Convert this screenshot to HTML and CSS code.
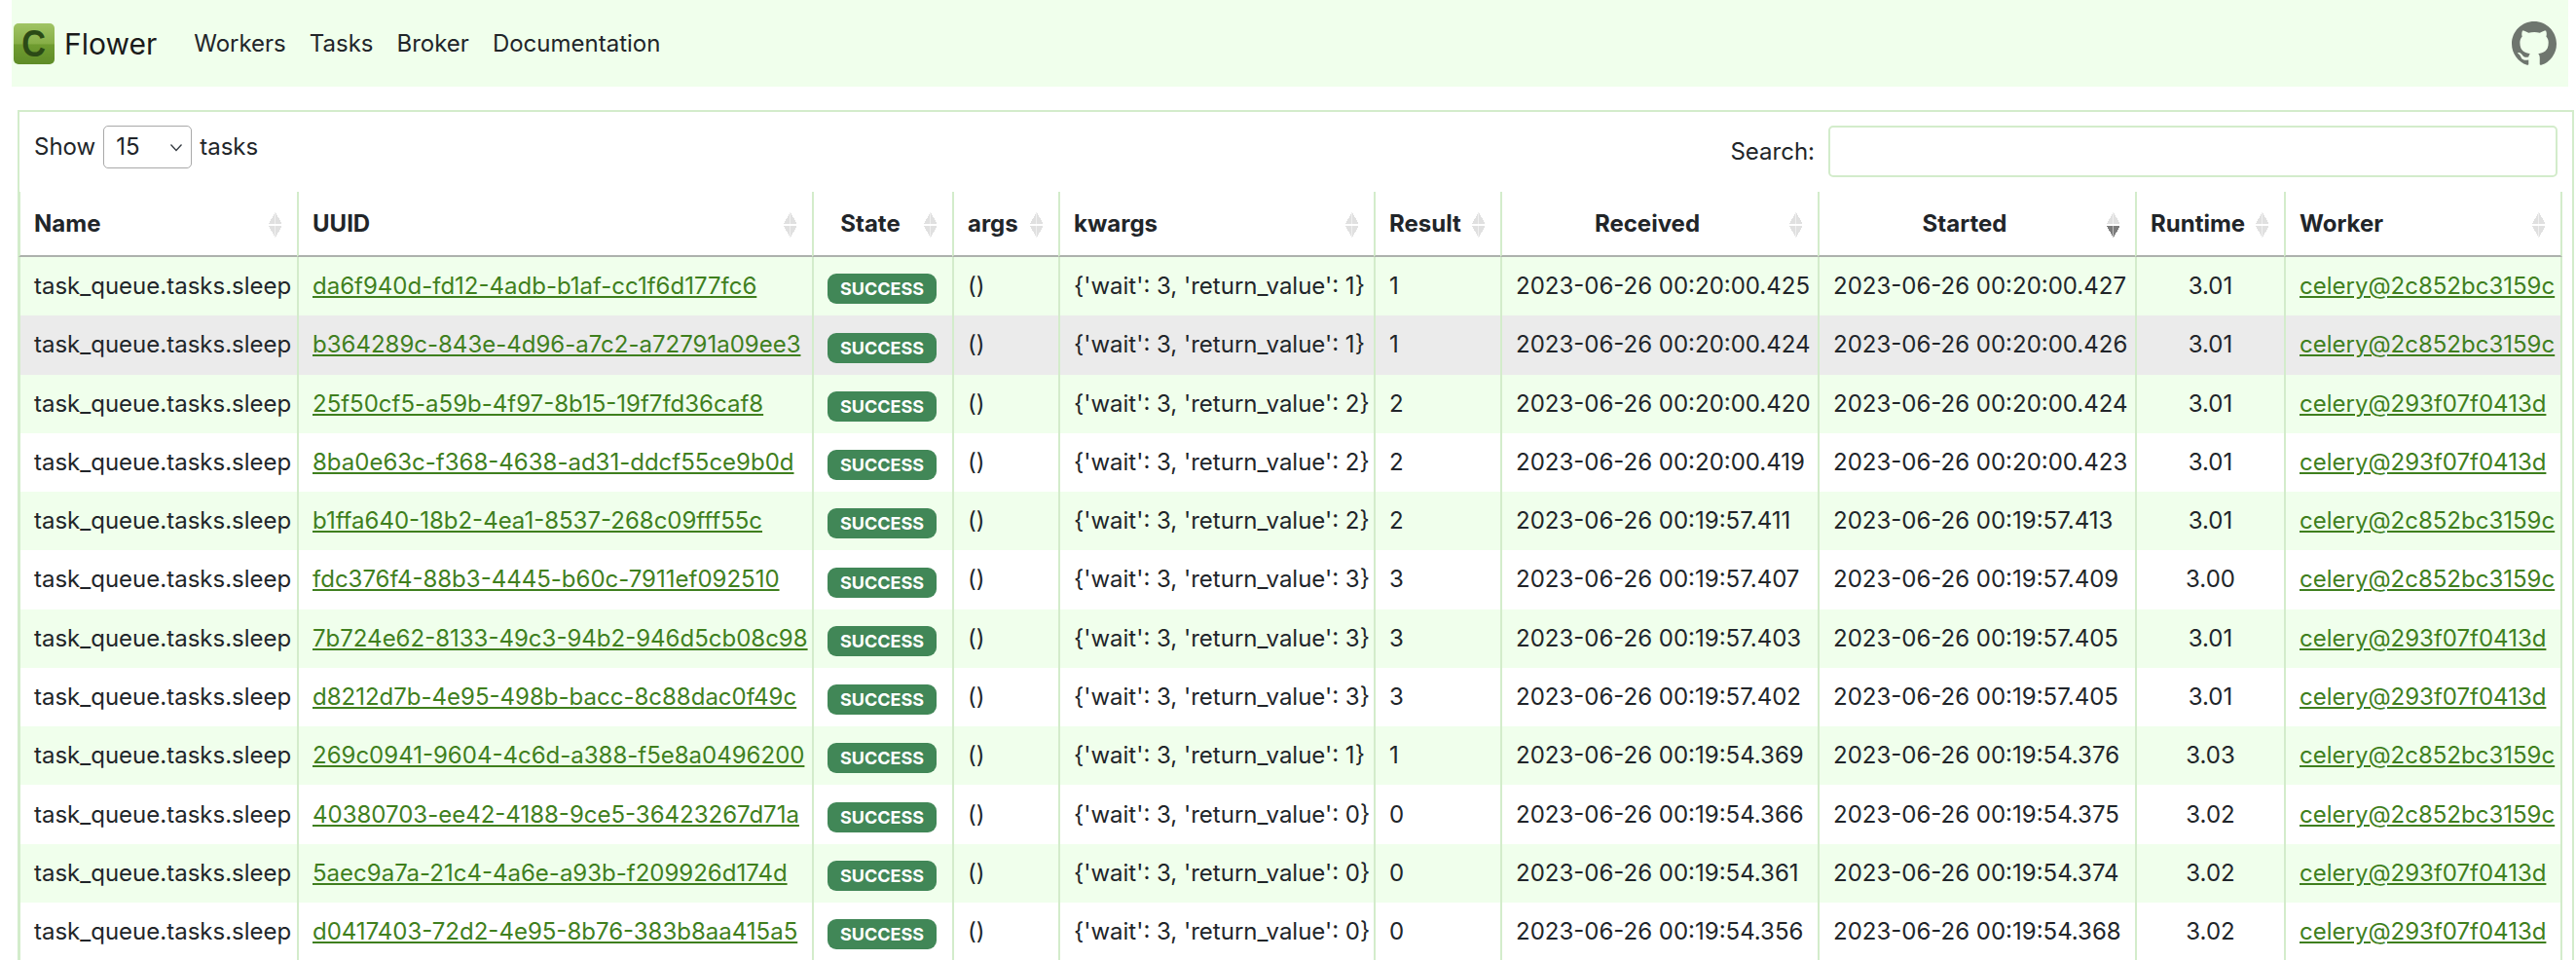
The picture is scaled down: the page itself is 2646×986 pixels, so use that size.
FILE: index.html
```html
<!DOCTYPE html>
<html lang="en">
<head>
<meta charset="utf-8">
<title>Flower</title>
<link rel="stylesheet" href="styles.css">
</head>
<body>
<nav class="navbar">
  <a class="brand" href="#"><span class="logo"><span class="logo-c">C</span></span><span>Flower</span></a>
  <ul class="nav-links">
    <li><a href="#">Workers</a></li>
    <li><a href="#">Tasks</a></li>
    <li><a href="#">Broker</a></li>
    <li><a href="#">Documentation</a></li>
  </ul>
  <a class="github" href="#" aria-label="GitHub">
    <svg viewBox="0 0 16 16" width="46" height="46"><path fill="#6e756e" d="M8 0C3.58 0 0 3.58 0 8c0 3.54 2.29 6.53 5.47 7.59.4.07.55-.17.55-.38 0-.19-.01-.82-.01-1.49-2.01.37-2.53-.49-2.69-.94-.09-.23-.48-.94-.82-1.13-.28-.15-.68-.52-.01-.53.63-.01 1.08.58 1.23.82.72 1.21 1.87.87 2.33.66.07-.52.28-.87.51-1.07-1.78-.2-3.64-.89-3.64-3.95 0-.87.31-1.59.82-2.15-.08-.2-.36-1.02.08-2.12 0 0 .67-.21 2.2.82.64-.18 1.32-.27 2-.27.68 0 1.36.09 2 .27 1.53-1.04 2.2-.82 2.2-.82.44 1.1.16 1.92.08 2.12.51.56.82 1.27.82 2.15 0 3.07-1.87 3.75-3.65 3.95.29.25.54.73.54 1.48 0 1.07-.01 1.93-.01 2.2 0 .21.15.46.55.38A8.013 8.013 0 0 0 16 8c0-4.42-3.58-8-8-8z"/></svg>
  </a>
</nav>
<main class="card">
  <div class="controls">
    <label class="length">Show
      <span class="select"><span>15</span><svg viewBox="0 0 16 16" width="16" height="16"><path fill="none" stroke="#343a40" stroke-width="1.3" d="M2.5 5.5 8 11.5l5.5-6"/></svg></span>
      tasks</label>
    <label class="search">Search: <input type="search" class="search-input"></label>
  </div>
  <table class="tasks">
    <colgroup>
      <col class="c-name"><col class="c-uuid"><col class="c-state"><col class="c-args"><col class="c-kwargs"><col class="c-result"><col class="c-time"><col class="c-time"><col class="c-runtime"><col class="c-worker">
    </colgroup>
    <thead>
      <tr>
        <th class="left">Name<span class="sort"></span></th>
        <th class="left">UUID<span class="sort"></span></th>
        <th>State<span class="sort"></span></th>
        <th class="left">args<span class="sort"></span></th>
        <th class="left">kwargs<span class="sort"></span></th>
        <th class="left">Result<span class="sort"></span></th>
        <th>Received<span class="sort"></span></th>
        <th>Started<span class="sort sort-desc"></span></th>
        <th>Runtime<span class="sort"></span></th>
        <th class="left">Worker<span class="sort"></span></th>
      </tr>
    </thead>
    <tbody>
      <tr><td>task_queue.tasks.sleep</td><td><a href="#">da6f940d-fd12-4adb-b1af-cc1f6d177fc6</a></td><td><span class="badge">SUCCESS</span></td><td>()</td><td>{'wait': 3, 'return_value': 1}</td><td>1</td><td>2023-06-26 00:20:00.425</td><td>2023-06-26 00:20:00.427</td><td class="center">3.01</td><td><a href="#">celery@2c852bc3159c</a></td></tr>
      <tr class="hover"><td>task_queue.tasks.sleep</td><td><a href="#">b364289c-843e-4d96-a7c2-a72791a09ee3</a></td><td><span class="badge">SUCCESS</span></td><td>()</td><td>{'wait': 3, 'return_value': 1}</td><td>1</td><td>2023-06-26 00:20:00.424</td><td>2023-06-26 00:20:00.426</td><td class="center">3.01</td><td><a href="#">celery@2c852bc3159c</a></td></tr>
      <tr><td>task_queue.tasks.sleep</td><td><a href="#">25f50cf5-a59b-4f97-8b15-19f7fd36caf8</a></td><td><span class="badge">SUCCESS</span></td><td>()</td><td>{'wait': 3, 'return_value': 2}</td><td>2</td><td>2023-06-26 00:20:00.420</td><td>2023-06-26 00:20:00.424</td><td class="center">3.01</td><td><a href="#">celery@293f07f0413d</a></td></tr>
      <tr><td>task_queue.tasks.sleep</td><td><a href="#">8ba0e63c-f368-4638-ad31-ddcf55ce9b0d</a></td><td><span class="badge">SUCCESS</span></td><td>()</td><td>{'wait': 3, 'return_value': 2}</td><td>2</td><td>2023-06-26 00:20:00.419</td><td>2023-06-26 00:20:00.423</td><td class="center">3.01</td><td><a href="#">celery@293f07f0413d</a></td></tr>
      <tr><td>task_queue.tasks.sleep</td><td><a href="#">b1ffa640-18b2-4ea1-8537-268c09fff55c</a></td><td><span class="badge">SUCCESS</span></td><td>()</td><td>{'wait': 3, 'return_value': 2}</td><td>2</td><td>2023-06-26 00:19:57.411</td><td>2023-06-26 00:19:57.413</td><td class="center">3.01</td><td><a href="#">celery@2c852bc3159c</a></td></tr>
      <tr><td>task_queue.tasks.sleep</td><td><a href="#">fdc376f4-88b3-4445-b60c-7911ef092510</a></td><td><span class="badge">SUCCESS</span></td><td>()</td><td>{'wait': 3, 'return_value': 3}</td><td>3</td><td>2023-06-26 00:19:57.407</td><td>2023-06-26 00:19:57.409</td><td class="center">3.00</td><td><a href="#">celery@2c852bc3159c</a></td></tr>
      <tr><td>task_queue.tasks.sleep</td><td><a href="#">7b724e62-8133-49c3-94b2-946d5cb08c98</a></td><td><span class="badge">SUCCESS</span></td><td>()</td><td>{'wait': 3, 'return_value': 3}</td><td>3</td><td>2023-06-26 00:19:57.403</td><td>2023-06-26 00:19:57.405</td><td class="center">3.01</td><td><a href="#">celery@293f07f0413d</a></td></tr>
      <tr><td>task_queue.tasks.sleep</td><td><a href="#">d8212d7b-4e95-498b-bacc-8c88dac0f49c</a></td><td><span class="badge">SUCCESS</span></td><td>()</td><td>{'wait': 3, 'return_value': 3}</td><td>3</td><td>2023-06-26 00:19:57.402</td><td>2023-06-26 00:19:57.405</td><td class="center">3.01</td><td><a href="#">celery@293f07f0413d</a></td></tr>
      <tr><td>task_queue.tasks.sleep</td><td><a href="#">269c0941-9604-4c6d-a388-f5e8a0496200</a></td><td><span class="badge">SUCCESS</span></td><td>()</td><td>{'wait': 3, 'return_value': 1}</td><td>1</td><td>2023-06-26 00:19:54.369</td><td>2023-06-26 00:19:54.376</td><td class="center">3.03</td><td><a href="#">celery@2c852bc3159c</a></td></tr>
      <tr><td>task_queue.tasks.sleep</td><td><a href="#">40380703-ee42-4188-9ce5-36423267d71a</a></td><td><span class="badge">SUCCESS</span></td><td>()</td><td>{'wait': 3, 'return_value': 0}</td><td>0</td><td>2023-06-26 00:19:54.366</td><td>2023-06-26 00:19:54.375</td><td class="center">3.02</td><td><a href="#">celery@2c852bc3159c</a></td></tr>
      <tr><td>task_queue.tasks.sleep</td><td><a href="#">5aec9a7a-21c4-4a6e-a93b-f209926d174d</a></td><td><span class="badge">SUCCESS</span></td><td>()</td><td>{'wait': 3, 'return_value': 0}</td><td>0</td><td>2023-06-26 00:19:54.361</td><td>2023-06-26 00:19:54.374</td><td class="center">3.02</td><td><a href="#">celery@293f07f0413d</a></td></tr>
      <tr><td>task_queue.tasks.sleep</td><td><a href="#">d0417403-72d2-4e95-8b76-383b8aa415a5</a></td><td><span class="badge">SUCCESS</span></td><td>()</td><td>{'wait': 3, 'return_value': 0}</td><td>0</td><td>2023-06-26 00:19:54.356</td><td>2023-06-26 00:19:54.368</td><td class="center">3.02</td><td><a href="#">celery@293f07f0413d</a></td></tr>
    </tbody>
  </table>
</main>
</body>
</html>
```
FILE: styles.css
```css
* { box-sizing: border-box; }
html, body { height: 100%; overflow: hidden; }
body {
  margin: 0;
  padding: 0 8px 0 12px;
  background: #fff;
  color: #212529;
  font-family: Inter, "Liberation Sans", sans-serif;
  font-size: 24px;
  line-height: 36px;
}
a { color: inherit; text-decoration: none; }

.navbar {
  display: flex;
  align-items: center;
  height: 89px;
  padding: 0 12px 0 2px;
  background: #f0ffec;
  font-size: 24px;
}
.brand { display: flex; align-items: center; gap: 10px; font-size: 30px; color: #1a1a1a; }
.logo {
  display: flex;
  align-items: center;
  justify-content: center;
  width: 42px;
  height: 42px;
  border-radius: 5px;
  background: linear-gradient(#a0c464 0%, #86ae46 50%, #6f9c30 52%, #5f8c28 100%);
}
.logo-c { font-family: "Liberation Sans", sans-serif; font-weight: 700; font-size: 38px; line-height: 1; color: #2b4a16; transform: scaleX(.9); }
.nav-links { display: flex; gap: 24px; list-style: none; margin: 0 auto 0 38px; padding: 0; }
.github { display: flex; }

.card {
  margin: 24px -6px 0 6px;
  border: 2px solid #d3eccb;
  border-bottom: 0;
  background: #fff;
}
.controls {
  display: flex;
  justify-content: space-between;
  align-items: flex-start;
  padding: 14px 15px 15px 15px;
}
.length { display: flex; align-items: center; gap: 6px; }
.select {
  display: flex;
  align-items: center;
  justify-content: space-between;
  width: 91px;
  height: 44px;
  margin: 0 2px;
  padding: 0 7px 0 12px;
  border: 1px solid #a9a9a9;
  border-radius: 5px;
}
.search { display: flex; align-items: center; gap: 14px; }
.search-input {
  width: 749px;
  height: 53px;
  border: 2px solid #d3eccb;
  border-radius: 5px;
  background: #fff;
}

.tasks {
  width: 2613px;
  margin-left: -1px;
  border-collapse: separate;
  border-spacing: 0;
  table-layout: fixed;
}
.c-name { width: 286px; }
.c-uuid { width: 529px; }
.c-state { width: 144px; }
.c-args { width: 109px; }
.c-kwargs { width: 324px; }
.c-result { width: 130px; }
.c-time { width: 326px; }
.c-runtime { width: 153px; }
.c-worker { width: 286px; }

th, td {
  border-left: 2px solid #d3eccb;
  white-space: nowrap;
  overflow: hidden;
}
th:last-child, td:last-child { border-right: 2px solid #d3eccb; }
th {
  position: relative;
  height: 67px;
  padding: 0 40px 0 14px;
  border-bottom: 2px solid #adb1ad;
  font-weight: 700;
  text-align: center;
}
th.left { text-align: left; }
td { height: 60.27px; padding: 0 14px; }
td.center { text-align: center; }
td a { color: #3f7f1e; text-decoration: underline; }
tbody tr:nth-child(odd) { background: #f0ffec; }
tbody tr.hover { background: #ebebeb; }

.sort {
  position: absolute;
  top: 21px;
  right: 16px;
  width: 13px;
  height: 26px;
  background:
    linear-gradient(to bottom right, transparent 50%, #e0e0e0 50%) left top / 50% 12px no-repeat,
    linear-gradient(to bottom left, transparent 50%, #e0e0e0 50%) right top / 50% 12px no-repeat,
    linear-gradient(to top right, transparent 50%, #e0e0e0 50%) left bottom / 50% 12px no-repeat,
    linear-gradient(to top left, transparent 50%, #e0e0e0 50%) right bottom / 50% 12px no-repeat;
}
.sort-desc {
  background:
    linear-gradient(to bottom right, transparent 50%, #e0e0e0 50%) left top / 50% 12px no-repeat,
    linear-gradient(to bottom left, transparent 50%, #e0e0e0 50%) right top / 50% 12px no-repeat,
    linear-gradient(to top right, transparent 50%, #7b7b7b 50%) left bottom / 50% 12px no-repeat,
    linear-gradient(to top left, transparent 50%, #7b7b7b 50%) right bottom / 50% 12px no-repeat;
}
.badge {
  display: inline-block;
  width: 112px;
  height: 31px;
  margin-top: 3px;
  border-radius: 9px;
  background: #418757;
  color: #fff;
  font-size: 18px;
  font-weight: 700;
  line-height: 31px;
  text-align: center;
  vertical-align: middle;
}
```
